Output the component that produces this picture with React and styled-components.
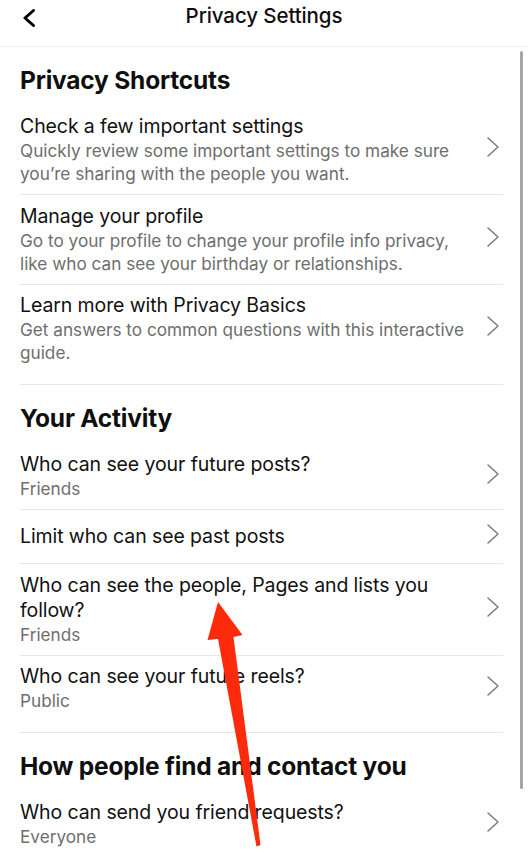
import React from 'react'
import styled, { createGlobalStyle } from 'styled-components'

const GlobalStyle = createGlobalStyle`
  html, body {
    margin: 0;
    padding: 0;
    background: #fff;
  }
  body {
    font-family: Inter, "Noto Sans", "Liberation Sans", sans-serif;
    color: #0f0f0f;
    -webkit-font-smoothing: antialiased;
  }
`

const Screen = styled.div`
  position: relative;
  width: 528px;
  height: 853px;
  overflow: hidden;
  background: #fff;
`

const Header = styled.header`
  height: 47px;
  border-bottom: 1px solid #ededed;
  box-sizing: border-box;
  display: grid;
  grid-template-columns: 60px 1fr 60px;
  align-items: start;
`

const BackButton = styled.button`
  border: none;
  background: none;
  padding: 9px 0 0 22px;
  margin: 0;
  display: flex;
  cursor: pointer;
`

const Title = styled.h1`
  margin: 0;
  text-align: center;
  font-size: 20.5px;
  font-weight: 500;
  line-height: 32px;
  letter-spacing: -0.1px;
`

const Section = styled.section`
  margin: 0 25px 0 20px;
  padding-bottom: 11px;
  border-bottom: ${({ last }) => (last ? 'none' : '1px solid #e6e6e6')};
`

const SectionTitle = styled.h2`
  margin: 0;
  padding: 18px 0 10.5px;
  font-size: 24.5px;
  font-weight: 700;
  line-height: 30px;
  letter-spacing: -0.2px;
`

const Row = styled.div`
  display: flex;
  align-items: center;
  min-height: 54px;
  box-sizing: border-box;
  padding: 8.5px 0 9px;
  border-bottom: ${({ last }) => (last ? 'none' : '1px solid #e6e6e6')};
`

const RowText = styled.div`
  flex: 1;
  padding-right: 18px;
`

const RowTitle = styled.div`
  font-size: 19.5px;
  line-height: 25px;
  letter-spacing: -0.1px;
  color: #111;
`

const RowSub = styled.div`
  font-size: 17.2px;
  line-height: 23px;
  color: #6e6e6e;
`

const Chevron = styled.svg`
  flex: none;
  width: 14px;
  height: 22px;
  margin: -5px 3px 0 0;
`

const ScrollBar = styled.div`
  position: absolute;
  top: 51px;
  left: 520px;
  width: 3px;
  height: 738px;
  border-radius: 2px;
  background: #a6a6a6;
`

const Annotation = styled.svg`
  position: absolute;
  top: 0;
  left: 0;
  width: 528px;
  height: 853px;
  pointer-events: none;
`

const sections = [
  {
    title: 'Privacy Shortcuts',
    rows: [
      {
        title: 'Check a few important settings',
        sub: 'Quickly review some important settings to make sure you\u2019re sharing with the people you want.'
      },
      {
        title: 'Manage your profile',
        sub: 'Go to your profile to change your profile info privacy, like who can see your birthday or relationships.'
      },
      {
        title: 'Learn more with Privacy Basics',
        sub: 'Get answers to common questions with this interactive guide.'
      }
    ]
  },
  {
    title: 'Your Activity',
    rows: [
      { title: 'Who can see your future posts?', sub: 'Friends' },
      { title: 'Limit who can see past posts' },
      { title: 'Who can see the people, Pages and lists you follow?', sub: 'Friends' },
      { title: 'Who can see your future reels?', sub: 'Public' }
    ]
  },
  {
    title: 'How people find and contact you',
    rows: [{ title: 'Who can send you friend requests?', sub: 'Everyone' }]
  }
]

const RightIcon = () => (
  <Chevron viewBox="0 0 14 22">
    <path d="M2 2 L12 11 L2 20" fill="none" stroke="#7a7a7a" strokeWidth="1.5" strokeLinecap="round" strokeLinejoin="round" />
  </Chevron>
)

const App = () => {
  return (
    <Screen>
      <GlobalStyle />
      <Header>
        <BackButton aria-label="Back">
          <svg width="14" height="18" viewBox="0 0 14 18">
            <path d="M11.5 1.5 L3 9 L11.5 16.5" fill="none" stroke="#000" strokeWidth="3" strokeLinecap="round" strokeLinejoin="round" />
          </svg>
        </BackButton>
        <Title>Privacy Settings</Title>
        <span />
      </Header>

      {sections.map((section, si) => (
        <Section key={section.title} last={si === sections.length - 1}>
          <SectionTitle>{section.title}</SectionTitle>
          {section.rows.map((row, ri) => (
            <Row key={row.title} last={ri === section.rows.length - 1}>
              <RowText>
                <RowTitle>{row.title}</RowTitle>
                {row.sub && <RowSub>{row.sub}</RowSub>}
              </RowText>
              <RightIcon />
            </Row>
          ))}
        </Section>
      ))}

      <ScrollBar />

      <Annotation viewBox="0 0 528 853">
        <polygon
          points="218,602 242.5,635 233.5,637 260.5,845 256.5,846.5 218,639 207.5,640"
          fill="#fe2a0c"
        />
      </Annotation>
    </Screen>
  )
}

export default App
